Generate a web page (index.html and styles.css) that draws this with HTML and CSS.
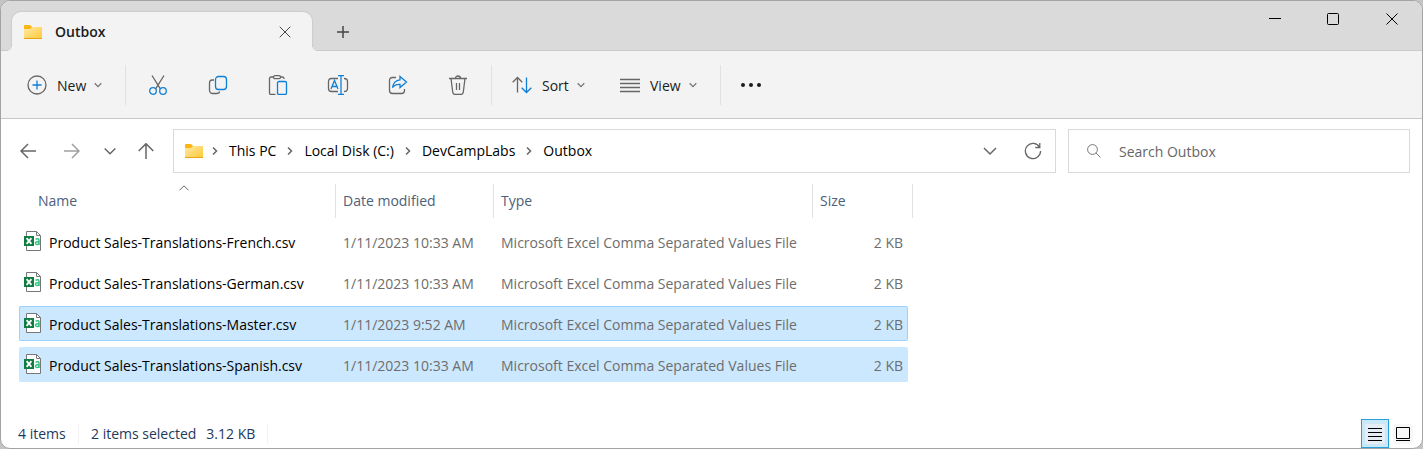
FILE: index.html
```html
<!DOCTYPE html>
<html lang="en">
<head>
<meta charset="utf-8">
<title>Outbox</title>
<link rel="stylesheet" href="styles.css">
</head>
<body>
<svg class="defs" aria-hidden="true">
  <defs>
    <linearGradient id="fold" x1="0" y1="0" x2="1" y2="1"><stop offset="0" stop-color="#ffe9a6"/><stop offset="1" stop-color="#fdc936"/></linearGradient>
    <symbol id="folder" viewBox="0 0 20 16"><path d="M1 2a1 1 0 0 1 1-1h5l2 2h9.500v3H1z" fill="#fbb615"/><path d="M1 5h6l2-2h10v12H1z" fill="url(#fold)"/><path d="M1 14h18v1H1z" fill="#e9a411"/></symbol>
    <symbol id="csv" viewBox="0 0 20 20"><path d="M3.500.5h10l4 4v15h-14z" fill="#fff" stroke="#777" /><path d="M13.500.5v4h4" fill="none" stroke="#777"/><path d="M1 5h10v10H1z" fill="#107c41"/><path d="M3.600 7.200l4.800 5.600M8.400 7.200l-4.800 5.600" stroke="#fff" stroke-width="1.800"/><path d="M12.500 8.200q3.500-1.500 3.500 1.300v4.500M16 10.700h-1.500q-2.300.2-2 1.700c.5 1.700 2.900 1.400 3.500-.4" fill="none" stroke="#33c481" stroke-width="1.500"/></symbol>
    <symbol id="down" viewBox="0 0 8 8"><path d="M.7 2.300L4 5.600l3.300-3.300" fill="none" stroke="currentColor"/></symbol>
    <symbol id="right" viewBox="0 0 8 10"><path d="M2 1.500L5.500 5L2 8.500" fill="none" stroke="currentColor" stroke-width="1.500"/></symbol>
  </defs>
</svg>
<div class="window">
  <header class="titlebar">
    <div class="tab">
      <svg class="folder"><use href="#folder"/></svg>
      <span class="tab-title">Outbox</span>
      <button class="tab-close" aria-label="Close tab"><svg width="12" height="12" viewBox="0 0 12 12"><path d="M.7.700l10.600 10.600M11.300.7L.7 11.300"/></svg></button>
    </div>
    <button class="new-tab" aria-label="New tab"><svg width="12" height="12" viewBox="0 0 12 12"><path d="M6 0v12M0 6h12"/></svg></button>
    <div class="caption">
      <button aria-label="Minimize"><svg width="12" height="12" viewBox="0 0 12 12"><path d="M0 5.500h12"/></svg></button>
      <button aria-label="Maximize"><svg width="12" height="12" viewBox="0 0 12 12"><rect x=".5" y=".5" width="11" height="11" rx="1"/></svg></button>
      <button aria-label="Close"><svg width="12" height="12" viewBox="0 0 12 12"><path d="M.5.500l11 11M11.500.5l-11 11"/></svg></button>
    </div>
  </header>

  <div class="toolbar">
    <button class="tool new"><svg width="20" height="20" viewBox="0 0 20 20"><circle cx="10" cy="10" r="9"/><path class="blue" d="M10 5.500v9M5.500 10h9"/></svg><span>New</span><svg class="chev"><use href="#down"/></svg></button>
    <span class="divider"></span>
    <div class="group">
      <button class="tool" aria-label="Cut"><svg width="20" height="20" viewBox="0 0 20 20"><path d="M4 .5l8.200 13.200M16 .5L7.800 13.700"/><circle class="blue" cx="5" cy="16" r="3.300"/><circle class="blue" cx="15" cy="16" r="3.300"/></svg></button>
      <button class="tool" aria-label="Copy"><svg width="20" height="20" viewBox="0 0 20 20"><path d="M6 5H4.200Q1.500 5 1.500 8v7q0 3.500 3.500 3.500h3.500Q11.500 18.500 11.500 16.500"/><rect class="blue" x="7.500" y="1.500" width="11" height="13" rx="3"/></svg></button>
      <button class="tool" aria-label="Paste"><svg width="20" height="20" viewBox="0 0 20 20"><path d="M6 2H3Q1.500 2 1.500 3.500v14.500q0 1.500 1.500 1.500h4.500M12 2h2.500Q16 2 16 4"/><rect x="5.500" y=".7" width="7" height="3" rx="1.500"/><rect class="blue" x="9.500" y="6.500" width="9" height="13" rx="1.500"/></svg></button>
      <button class="tool" aria-label="Rename"><svg width="22" height="20" viewBox="0 0 22 20"><path d="M11 3.500H4.500Q1.500 3.500 1.500 6.500v7q0 3 3 3H11M17 3.500q3.500 0 3.500 3v7q0 3-3.500 3"/><path class="blue" d="M4 14L7.500 5.500L11 14M5.200 11.500h4.600M14 .5v19M11 .5h6M11 19.500h6"/></svg></button>
      <button class="tool" aria-label="Share"><svg width="20" height="20" viewBox="0 0 20 20"><path d="M8 2.500H4.500Q1.500 2.500 1.500 5.500v10q0 3 3 3h9q3 0 3-3V14"/><path class="blue" d="M12 1.500l6.500 5.500-6.500 5.500V9.300Q7 9 4.500 12.500Q5.500 5.500 12 4.800z"/></svg></button>
      <button class="tool" aria-label="Delete"><svg width="20" height="20" viewBox="0 0 20 20"><path d="M1 3.500h18M3 3.500l1.700 13.500q.3 2.500 2.500 2.500h5.600q2.200 0 2.500-2.500L17 3.500M7.500 3.500q0-2.500 2.500-2.500t2.500 2.500M8.500 8v7M11.500 8v7"/></svg></button>
    </div>
    <span class="divider"></span>
    <button class="tool sort"><svg width="20" height="20" viewBox="0 0 20 20"><path d="M5.500 17.500V2.500M.7 7.300L5.500 2.500l4.800 4.800"/><path class="blue" d="M14.500 2.500v15M9.700 12.700l4.800 4.800 4.800-4.800"/></svg><span>Sort</span><svg class="chev"><use href="#down"/></svg></button>
    <button class="tool view"><svg width="20" height="20" viewBox="0 0 20 20"><path d="M0 4.500h20M0 8.500h20M0 12.500h20M0 16.500h20"/></svg><span>View</span><svg class="chev"><use href="#down"/></svg></button>
    <span class="divider"></span>
    <button class="tool" aria-label="See more"><svg class="dots" width="22" height="20" viewBox="0 0 22 20"><circle cx="3" cy="10" r="2"/><circle cx="11" cy="10" r="2"/><circle cx="19" cy="10" r="2"/></svg></button>
  </div>

  <nav class="navbar">
    <button class="nav" aria-label="Back"><svg width="16" height="16" viewBox="0 0 16 16"><path d="M16 8H1M8 1L1 8l7 7"/></svg></button>
    <button class="nav off" aria-label="Forward"><svg width="16" height="16" viewBox="0 0 16 16"><path d="M0 8h15M8 1l7 7-7 7"/></svg></button>
    <button class="nav small" aria-label="Recent locations"><svg width="12" height="12" viewBox="0 0 12 12"><path d="M.7 3.500L6 8.700l5.300-5.200"/></svg></button>
    <button class="nav up" aria-label="Up"><svg width="16" height="16" viewBox="0 0 16 16"><path d="M8 16V1M.7 8L8 .7 15.300 8"/></svg></button>
    <div class="address">
      <svg class="folder"><use href="#folder"/></svg>
      <svg class="sep"><use href="#right"/></svg><a href="#">This PC</a>
      <svg class="sep"><use href="#right"/></svg><a href="#">Local Disk (C:)</a>
      <svg class="sep"><use href="#right"/></svg><a href="#">DevCampLabs</a>
      <svg class="sep"><use href="#right"/></svg><a href="#">Outbox</a>
      <button class="nav history" aria-label="Previous locations"><svg width="14" height="12" viewBox="0 0 14 12"><path d="M1 3l6 6 6-6"/></svg></button>
      <button class="nav refresh" aria-label="Refresh"><svg width="18" height="18" viewBox="0 0 18 18"><path d="M15.500 5A7.600 7.600 0 1 0 16.600 9M15.800 1v4.500h-4.500"/></svg></button>
    </div>
    <label class="search">
      <svg width="14" height="14" viewBox="0 0 14 14"><circle cx="5.500" cy="5.500" r="4.900"/><path d="M9 9l4.500 4.500"/></svg>
      <input type="text" placeholder="Search Outbox" aria-label="Search Outbox">
    </label>
  </nav>

  <main class="files">
    <table>
      <colgroup><col class="c-name"><col class="c-date"><col class="c-type"><col class="c-size"><col class="c-end"></colgroup>
      <thead>
        <tr><th class="name" aria-sort="ascending">Name<svg class="asc" width="10" height="6" viewBox="0 0 10 6"><path d="M.5 5.300L5 .8l4.500 4.500"/></svg></th><th>Date modified</th><th>Type</th><th colspan="2">Size</th></tr>
      </thead>
      <tbody>
        <tr><td class="file"><svg class="csv"><use href="#csv"/></svg>Product Sales-Translations-French.csv</td><td>1/11/2023 10:33 AM</td><td>Microsoft Excel Comma Separated Values File</td><td class="size">2 KB</td></tr>
        <tr><td class="file"><svg class="csv"><use href="#csv"/></svg>Product Sales-Translations-German.csv</td><td>1/11/2023 10:33 AM</td><td>Microsoft Excel Comma Separated Values File</td><td class="size">2 KB</td></tr>
        <tr class="selected focused"><td class="file"><svg class="csv"><use href="#csv"/></svg>Product Sales-Translations-Master.csv</td><td>1/11/2023 9:52 AM</td><td>Microsoft Excel Comma Separated Values File</td><td class="size">2 KB</td></tr>
        <tr class="selected"><td class="file"><svg class="csv"><use href="#csv"/></svg>Product Sales-Translations-Spanish.csv</td><td>1/11/2023 10:33 AM</td><td>Microsoft Excel Comma Separated Values File</td><td class="size">2 KB</td></tr>
      </tbody>
    </table>
  </main>

  <footer class="status">
    <span class="count">4 items</span>
    <span class="picked">2 items selected</span>
    <span class="total">3.12 KB</span>
    <div class="modes">
      <button class="mode on" aria-label="Details view"><svg width="20" height="20" viewBox="0 0 20 20"><path d="M3 4.500h14M3 8.500h14M3 12.500h14M3 16.500h14"/></svg></button>
      <button class="mode" aria-label="Large icons view"><svg width="20" height="20" viewBox="0 0 20 20"><path d="M3.500 3.500h13v11h-13zM3 16.500h14"/></svg></button>
    </div>
  </footer>
</div>
</body>
</html>
```
FILE: styles.css
```css
* { box-sizing: border-box; }
body {
  margin: 0;
  background: #c4c4c4;
  color: #1b1b1b;
  font: 14px/20px "Open Sans", "Noto Sans", sans-serif;
}
.defs { position: absolute; width: 0; height: 0; }
svg { display: block; flex: none; fill: none; stroke: currentColor; }
button {
  display: flex;
  align-items: center;
  justify-content: center;
  padding: 0;
  border: 0;
  background: none;
  color: inherit;
  font: inherit;
}
.window {
  display: flex;
  flex-direction: column;
  min-height: 100vh;
  border: 1px solid #a3a3a3;
  border-radius: 10px;
  background: #fff;
  overflow: hidden;
}
.folder { width: 20px; height: 16px; stroke: none; }

.titlebar {
  display: flex;
  align-items: flex-end;
  height: 50px;
  padding-left: 11px;
  background: #dadada;
  border-bottom: 1px solid #cbcbcb;
}
.tab {
  position: relative;
  display: flex;
  align-items: center;
  width: 300px;
  height: 39px;
  margin-bottom: -1px;
  padding: 0 21px 0 11px;
  border-radius: 9px 9px 0 0;
  background: #f3f3f3;
  box-shadow: 0 0 1px 1px #cdcdcd;
  clip-path: inset(-2px -4px 0);
}
.tab::before, .tab::after {
  content: "";
  position: absolute;
  bottom: 0;
  width: 4px;
  height: 4px;
}
.tab::before { left: -4px; background: radial-gradient(circle at 0 0, #dadada 3px, #f3f3f3 4px); }
.tab::after { right: -4px; background: radial-gradient(circle at 100% 0, #dadada 3px, #f3f3f3 4px); }
.tab-title { flex: 1; margin-left: 12px; font-weight: 600; }
.tab-close { width: 13px; height: 24px; color: #444; }
.new-tab { width: 62px; height: 36px; color: #444; stroke-width: 1.500; }
.caption { display: flex; align-self: flex-start; margin-left: auto; color: #000; }
.caption button { width: 58px; height: 36px; }
.caption button:last-child { width: 60px; }

.toolbar {
  display: flex;
  align-items: center;
  height: 68px;
  background: #f3f3f3;
  border-bottom: 1px solid #c6c6c6;
}
.tool { width: 60px; height: 40px; }
.tool svg { color: #666; stroke-width: 1.300; }
.tool .blue { stroke: #0f7fd6; }
.tool span { padding-top: 2px; }
.new, .sort, .view { justify-content: flex-start; gap: 10px; }
.tool .chev { width: 8px; height: 8px; margin-left: -2px; color: #777; }
.new { width: 124px; padding-left: 26px; }
.sort { width: 108px; padding-left: 20px; }
.view { width: 120px; padding-left: 20px; }
.tool .dots { fill: #1b1b1b; stroke: none; }
.divider { width: 1px; height: 40px; background: #e1e1e1; }
.group { display: flex; padding: 0 3px 0 2px; }

.navbar { display: flex; align-items: center; padding: 10px 12px 0 5px; }
.nav { width: 44px; height: 36px; color: #666; stroke-width: 1.500; }
.nav.off { color: #a0a0a0; }
.nav.small { width: 32px; }
.nav.up { width: 40px; margin-right: 7px; }
.address {
  display: flex;
  flex: 1;
  align-items: center;
  height: 44px;
  margin-right: 12px;
  padding: 0 10px;
  border: 1px solid #d9d9d9;
}
.address a { color: #000; text-decoration: none; white-space: nowrap; }
.address .folder { margin-right: -3px; }
.sep { width: 8px; height: 10px; margin: 0 10px; color: #666; }
.nav.history { margin-left: auto; }
.nav.refresh { width: 24px; margin-left: 9px; stroke-width: 1.300; }
.search {
  display: flex;
  align-items: center;
  gap: 18px;
  width: 342px;
  height: 44px;
  padding: 0 18px;
  border: 1px solid #d9d9d9;
  color: #777;
}
.search input {
  flex: 1;
  min-width: 0;
  padding: 2px 0 0;
  border: 0;
  outline: 0;
  background: none;
  font: inherit;
}
.search input::placeholder { color: #666; opacity: 1; }

.files { flex: 1; padding: 5px 0 0 18px; }
table {
  width: 894px;
  border-collapse: separate;
  border-spacing: 0 6px;
  table-layout: fixed;
}
.c-name { width: 317px; }
.c-date { width: 158px; }
.c-type { width: 319px; }
.c-size { width: 95px; }
.c-end { width: 5px; }
th {
  height: 34px;
  padding: 0 7px;
  border-right: 1px solid #e2e2e2;
  color: #4c607a;
  font-weight: 400;
  text-align: left;
}
th.name { position: relative; padding-left: 19px; }
.asc { position: absolute; top: 1px; left: 160px; color: #666; }
td {
  height: 35px;
  padding: 2px 7px 0;
  border: solid transparent;
  border-width: 1px 0;
  color: #6d6d6d;
  white-space: nowrap;
}
td:first-child { border-left-width: 1px; border-radius: 2px 0 0 2px; }
td.size { padding-right: 4px; border-right-width: 1px; border-radius: 0 2px 2px 0; text-align: right; }
td.file { padding-left: 29px; color: #000; }
.csv { float: left; width: 20px; height: 20px; margin: -2px 0 0 -26px; stroke: none; }
.selected td { background: #cce8ff; border-color: #cce8ff; }
.selected.focused td { border-color: #99d1ff; }

.status {
  display: flex;
  align-items: flex-end;
  height: 30px;
  padding: 0 5px 0 17px;
  color: #1e395b;
}
.status span { margin-bottom: 4px; }
.count { width: 61px; border-right: 1px solid #f3f3f3; }
.picked { margin-left: 12px; }
.total { margin-left: 10px; padding-right: 12px; border-right: 1px solid #f3f3f3; }
.modes { display: flex; margin-left: auto; color: #000; }
.mode { width: 28px; height: 29px; border: 1px solid transparent; }
.mode svg { border-radius: 2px; background: #f7f7f7; }
.mode.on { border-color: #26a0da; background: #cbe8f6; }
.mode.on svg { background: #e5eef5; }
```
